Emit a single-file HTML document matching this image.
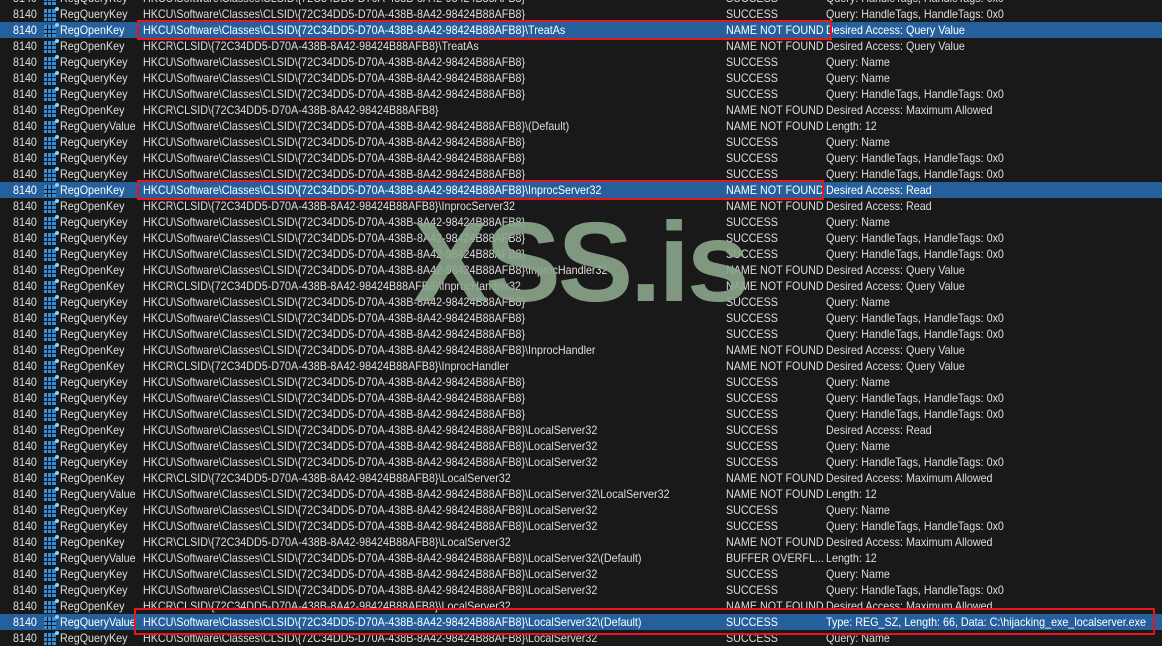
<!DOCTYPE html>
<html><head><meta charset="utf-8"><style>
*{margin:0;padding:0;box-sizing:border-box}
body{width:1162px;height:645px;overflow:hidden;background:#191919;font-family:"Liberation Sans",sans-serif;font-size:12px;color:#dedede;position:relative}
.r{position:absolute;left:0;width:1162px;height:16px;line-height:16px;white-space:nowrap}
.r.s{background:#26609c;color:#fff}
.r span{position:absolute;top:0;transform:scaleX(0.895);transform-origin:0 0}
.p{left:13px}
.r span.i{left:44px;top:3px;transform:none;width:12px;height:12px;background:
linear-gradient(90deg,transparent 3px,#191919 3px,#191919 4px,transparent 4px,transparent 7px,#191919 7px,#191919 8px,transparent 8px),
linear-gradient(0deg,transparent 3px,#191919 3px,#191919 4px,transparent 4px,transparent 7px,#191919 7px,#191919 8px,transparent 8px),#2f8fe0}
.i:after{content:"";position:absolute;right:-3px;top:-2px;width:4px;height:4px;border-radius:2px;background:#7fd4ff}
.o{left:60px}.k{left:143px}.re{left:726px}.d{left:826px}
.box{position:absolute;border:2px solid #e8141e}
.wm{position:absolute;left:413px;top:197px;font-size:113px;font-weight:bold;font-family:"Liberation Sans",sans-serif;color:rgba(140,165,140,0.9);letter-spacing:-3px}
</style></head><body>
<div id="c"></div>
<div class="wm">XSS.is</div>
<div class="box" style="left:137px;top:20px;width:695px;height:20px"></div>
<div class="box" style="left:137px;top:180px;width:687px;height:20px"></div>
<div class="box" style="left:134px;top:608px;width:1021px;height:27px"></div>
<script>
var U="HKCU\\Software\\Classes\\CLSID\\{72C34DD5-D70A-438B-8A42-98424B88AFB8}",R="HKCR\\CLSID\\{72C34DD5-D70A-438B-8A42-98424B88AFB8}";
var QK="RegQueryKey",OK="RegOpenKey",QV="RegQueryValue",S="SUCCESS",N="NAME NOT FOUND";
var HT="Query: HandleTags, HandleTags: 0x0",NM="Query: Name",QVa="Desired Access: Query Value",MX="Desired Access: Maximum Allowed",RD="Desired Access: Read";
var L=U+"\\LocalServer32";
var rows=[
[QK,U,S,HT],[QK,U,S,HT],[OK,U+"\\TreatAs",N,QVa,1],[OK,R+"\\TreatAs",N,QVa],[QK,U,S,NM],[QK,U,S,NM],[QK,U,S,HT],[OK,R,N,MX],[QV,U+"\\(Default)",N,"Length: 12"],[QK,U,S,NM],[QK,U,S,HT],[QK,U,S,HT],
[OK,U+"\\InprocServer32",N,RD,1],[OK,R+"\\InprocServer32",N,RD],[QK,U,S,NM],[QK,U,S,HT],[QK,U,S,HT],[OK,U+"\\InprocHandler32",N,QVa],[OK,R+"\\InprocHandler32",N,QVa],[QK,U,S,NM],[QK,U,S,HT],[QK,U,S,HT],
[OK,U+"\\InprocHandler",N,QVa],[OK,R+"\\InprocHandler",N,QVa],[QK,U,S,NM],[QK,U,S,HT],[QK,U,S,HT],[OK,L,S,RD],[QK,L,S,NM],[QK,L,S,HT],[OK,R+"\\LocalServer32",N,MX],
[QV,L+"\\LocalServer32",N,"Length: 12"],[QK,L,S,NM],[QK,L,S,HT],[OK,R+"\\LocalServer32",N,MX],[QV,L+"\\(Default)","BUFFER OVERFL...","Length: 12"],[QK,L,S,NM],[QK,L,S,HT],[OK,R+"\\LocalServer32",N,MX],
[QV,L+"\\(Default)",S,"Type: REG_SZ, Length: 66, Data: C:\\hijacking_exe_localserver.exe",1],[QK,L,S,NM]];
var h="";
rows.forEach(function(r,i){var t=-10+16*i;
h+='<div class="r'+(r[4]?' s':'')+'" style="top:'+t+'px"><span class="p">8140</span><span class="i"></span><span class="o">'+r[0]+'</span><span class="k">'+r[1]+'</span><span class="re">'+r[2]+'</span><span class="d">'+r[3]+'</span></div>';});
document.getElementById("c").innerHTML=h;
</script>
</body></html>
